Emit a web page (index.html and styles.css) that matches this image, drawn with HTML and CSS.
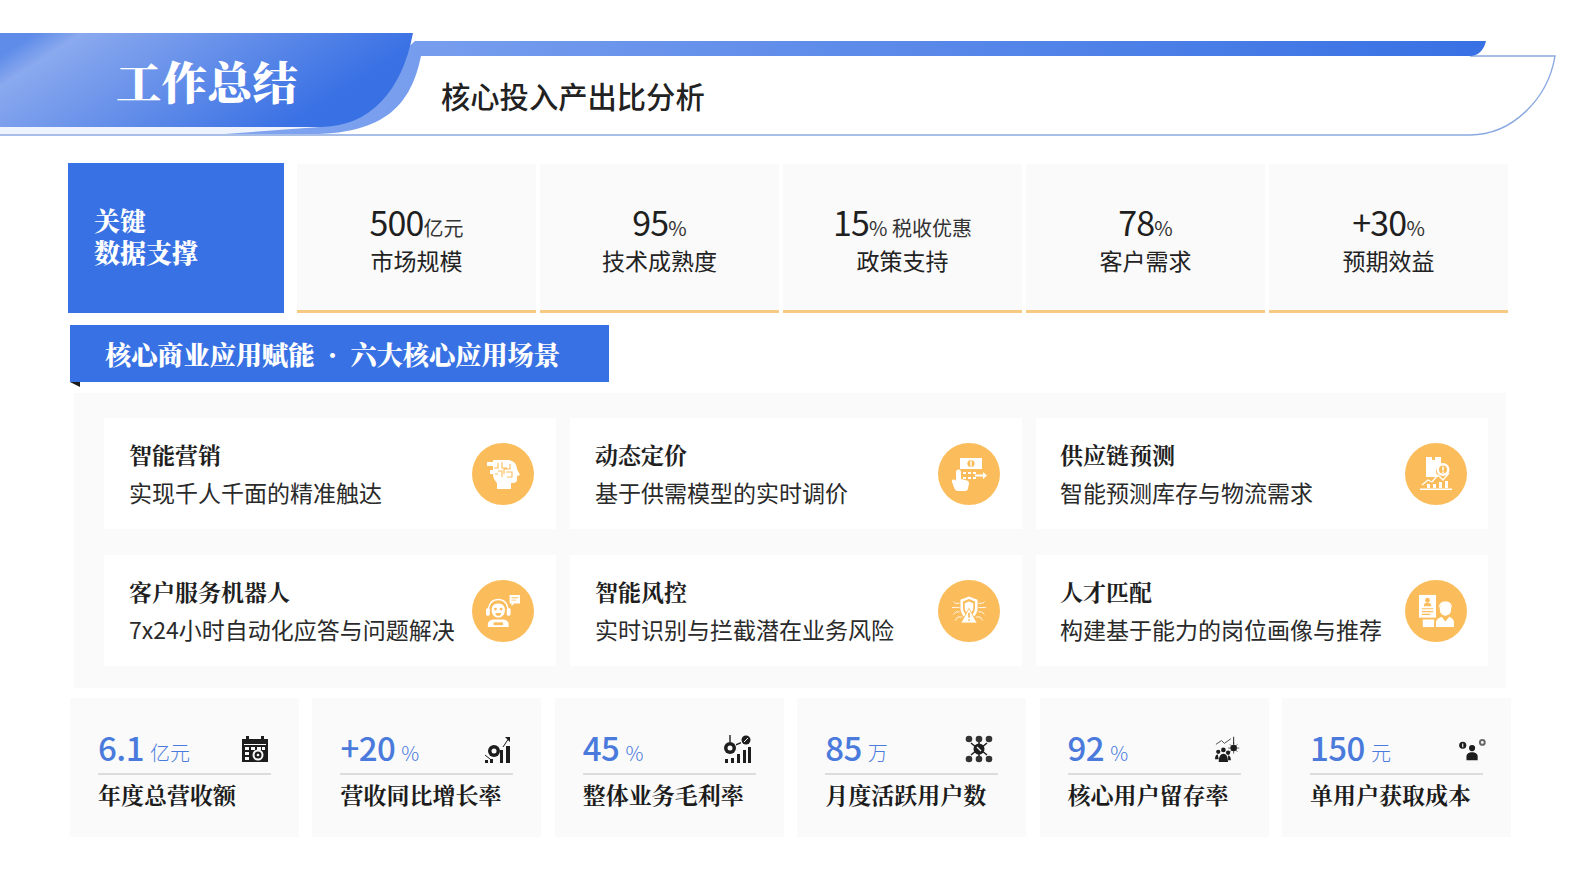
FILE: index.html
```html
<!DOCTYPE html>
<html lang="zh-CN">
<head>
    <meta charset="UTF-8">
    <title>工作总结</title>
    <link rel="stylesheet" href="styles.css">
</head>
<body>
<div class="page">

    <header class="header">
        <svg class="header-bg" viewBox="0 0 1569 110" width="1569" height="110" aria-hidden="true">
            <defs>
                <linearGradient id="barGrad" x1="0" x2="1" y1="0" y2="0">
                    <stop offset="0" stop-color="#82a5ef"/>
                    <stop offset="1" stop-color="#3871e4"/>
                </linearGradient>
                <linearGradient id="mainGrad" x1="0" x2="1" y1="0.25" y2="0.6">
                    <stop offset="0" stop-color="#5f8ce9"/>
                    <stop offset="0.1" stop-color="#8aa9ee"/>
                    <stop offset="0.85" stop-color="#3a71e4"/>
                    <stop offset="1" stop-color="#3871e4"/>
                </linearGradient>
            </defs>
            <path d="M0 94 H340 V101 H0 Z" fill="#eef3fd"/>
            <path d="M0 102 H1470 C1512 102 1548 66 1555 23 H1470" fill="none" stroke="#8aa9e0" stroke-width="1.4"/>
            <path d="M415 8 H1486 C1484 17 1478 23 1470 23 H421 C411 72 385 101 310 101 H225 L320 94 Z" fill="url(#barGrad)"/>
            <path d="M0 0 H413 C402 58 370 94 320 94 H0 Z" fill="url(#mainGrad)"/>
        </svg>
        <h1 class="header-title">工作总结</h1>
        <h2 class="header-sub">核心投入产出比分析</h2>
    </header>

    <section class="data-row">
        <div class="data-key">关键<br>数据支撑</div>
        <div class="data-card">
            <div class="data-value">500<small>亿元</small></div>
            <div class="data-label">市场规模</div>
        </div>
        <div class="data-card">
            <div class="data-value">95<small>%</small></div>
            <div class="data-label">技术成熟度</div>
        </div>
        <div class="data-card">
            <div class="data-value">15<small>% 税收优惠</small></div>
            <div class="data-label">政策支持</div>
        </div>
        <div class="data-card">
            <div class="data-value">78<small>%</small></div>
            <div class="data-label">客户需求</div>
        </div>
        <div class="data-card">
            <div class="data-value">+30<small>%</small></div>
            <div class="data-label">预期效益</div>
        </div>
    </section>

    <h3 class="section-title">核心商业应用赋能<span class="section-dot">·</span>六大核心应用场景</h3>

    <section class="panel">
        <div class="scene">
            <div class="scene-text">
                <h4>智能营销</h4>
                <p>实现千人千面的精准触达</p>
            </div>
            <div class="scene-icon">
                <svg viewBox="0 0 34 34" fill="#fff"><path d="M12 3h9c6 0 10 4 10 9l3 6-3 1v4c0 2-2 3-4 3h-2v6H11v-6c-3-3-4-6-4-9H4v-4h3V9H1V5h6V3h5z"/><g fill="none" stroke="#fbbd5c" stroke-width="1.1"><path d="M12 6v5h-4M16 5v6h5M24 7v5h-6v5M12 14h4v6M20 15h6v5h-5M9 17h3"/></g></svg>
            </div>
        </div>
        <div class="scene">
            <div class="scene-text">
                <h4>动态定价</h4>
                <p>基于供需模型的实时调价</p>
            </div>
            <div class="scene-icon">
                <svg viewBox="0 0 36 34" fill="#fff"><path d="M9 1h22v11H9z"/><circle cx="20" cy="6.500" r="3.600" fill="#fbbd5c"/><path d="M19.300 3.500h1.400v6h-1.400z"/><path d="M12 15h3v2h-3zM17 15h3v2h-3zM12 20h3v2h-3zM17 20h3v2h-3zM22 15h3v2h-3zM22 20h3v2h-3z"/><path d="M24 17.500h8V15l4 3.500-4 3.500v-2.500h-8z"/><path d="M5 15a2.500 2.500 0 0 1 5 0v7l6 1.500c1.500.5 2 1.500 2 3l-1 5c-.3 1.500-1 2.500-3 2.500H7c-2 0-3-1-3.500-2.500L1 25c-.5-1.500.5-3 2-2.500l2 1z"/></svg>
            </div>
        </div>
        <div class="scene">
            <div class="scene-text">
                <h4>供应链预测</h4>
                <p>智能预测库存与物流需求</p>
            </div>
            <div class="scene-icon">
                <svg viewBox="0 0 34 34" fill="#fff"><path d="M7 0h6v3h3V0h6v7a7.500 7.500 0 0 0-2 13H7z"/><circle cx="24" cy="12.500" r="6.500"/><circle cx="24" cy="12.500" r="4" fill="#fbbd5c"/><path d="M23.300 9.500h1.500v4h-1.500zM23.300 14.500h1.500v1.500h-1.500z"/><path d="M3 28l6-5 4 2 6-7 5 5 6-7" fill="none" stroke="#fff" stroke-width="1.300"/><path d="M8 27h3v4H8zM14 27h3v4h-3zM20 25h3v6h-3zM26 24h3v7h-3zM1 31.500h32V33H1z"/></svg>
            </div>
        </div>
        <div class="scene">
            <div class="scene-text">
                <h4>客户服务机器人</h4>
                <p>7x24小时自动化应答与问题解决</p>
            </div>
            <div class="scene-icon">
                <svg viewBox="0 0 38 36" fill="#fff"><path d="M26 1h11v9h-6l-3 3v-3h-2z"/><path d="M28 3.500h7v1h-7zM28 6h5v1h-5z" fill="#fbbd5c"/><path d="M3 17C3 9 8 5 14 5s11 4 11 12h-1.500C23.500 10 19 6.500 14 6.500S4.500 10 4.500 17z"/><rect x="1" y="15" width="4" height="8" rx="1.500"/><rect x="23" y="15" width="4" height="8" rx="1.500"/><path d="M14 10c5 0 7 3 7 7 0 5-3 8-7 8s-7-3-7-8c0-4 2-7 7-7z"/><circle cx="11" cy="16" r="1.500" fill="#fbbd5c"/><circle cx="17" cy="16" r="1.500" fill="#fbbd5c"/><path d="M11 20h6c0 2-1.500 3-3 3s-3-1-3-3z" fill="#fbbd5c"/><path d="M3 35v-3c0-3 3-5 7-5h8c4 0 7 2 7 5v3z"/><path d="M9 30h10v3H9z" fill="#fbbd5c"/></svg>
            </div>
        </div>
        <div class="scene">
            <div class="scene-text">
                <h4>智能风控</h4>
                <p>实时识别与拦截潜在业务风险</p>
            </div>
            <div class="scene-icon">
                <svg viewBox="0 0 42 36" fill="#fff"><path d="M21 1l10 4v9c0 7-4 12-10 15-6-3-10-8-10-15V5z"/><path d="M21 4l7 3v7c0 5-3 9-7 11-4-2-7-6-7-11V7z" fill="#fbbd5c"/><path d="M21 7l5 2v5c0 4-2 6-5 8-3-2-5-4-5-8V9z"/><path d="M21 15l9.500 17h-19z" stroke="#fbbd5c" stroke-width="1"/><path d="M20 20h2v6h-2zM20 27.500h2v2h-2z" fill="#fbbd5c"/><g fill="none" stroke="#fff" stroke-width="1"><path d="M10 9H5L3 7M10 14H1M10 19H6l-3 3M13 25H8l-3 4M32 9h5l2-2M32 14h9M32 19h4l3 3M29 25h5l3 4"/></g></svg>
            </div>
        </div>
        <div class="scene">
            <div class="scene-text">
                <h4>人才匹配</h4>
                <p>构建基于能力的岗位画像与推荐</p>
            </div>
            <div class="scene-icon">
                <svg viewBox="0 0 38 36" fill="#fff"><path d="M1 1h18v24H1z"/><circle cx="10" cy="6.500" r="2.500" fill="#fbbd5c"/><path d="M6 13c0-3 2-4 4-4s4 1 4 4z" fill="#fbbd5c"/><path d="M4 15h12v1.200H4zM4 18h12v1.200H4zM4 21h9v1.200H4z" fill="#fbbd5c"/><path d="M5 27h12v8H5z"/><path d="M23 16c0-4 2-6 6-6s6 2 6 6c0 4-2 7-6 7s-6-3-6-7z"/><path d="M22 15c0-5 3-7 7-7s7 2 7 7l-2-3c-3 1-7 1-10 0z"/><path d="M19 35v-5c0-3 3-5 6-6l4 5 4-5c3 1 5 3 5 6v5z"/></svg>
            </div>
        </div>
    </section>

    <section class="stats">
        <div class="stat">
            <div class="stat-head">
                <div class="stat-value">6.1<small>亿元</small></div>
                <svg class="stat-icon" viewBox="0 0 28 28" fill="#1d1d1d"><path d="M5 1h3v3h12V1h3v3h4v23H1V4h4z"/><path d="M3 9h22v1H3z" fill="#fafafa"/><path d="M4 12h4v3H4zM10 12h4v3h-4zM16 12h4v3h-4zM21 12h3v3h-3zM4 17h4v3H4zM4 22h4v3H4z" fill="#fafafa"/><circle cx="17" cy="20" r="5.500" fill="#fafafa"/><circle cx="17" cy="20" r="3.500"/><circle cx="17" cy="20" r="1.300" fill="#fafafa"/></svg>
            </div>
            <div class="stat-label">年度总营收额</div>
        </div>
        <div class="stat">
            <div class="stat-head">
                <div class="stat-value">+20<small>%</small></div>
                <svg class="stat-icon" viewBox="0 0 28 28" fill="#1d1d1d"><path d="M2 25h3v3H2zM7 24h3v4H7zM17 15h3v13h-3zM23 11h4v17h-4z"/><circle cx="11" cy="16" r="6"/><circle cx="11" cy="16" r="2.500" fill="#fafafa"/><path d="M2 20l5 4M20 12l6-9" fill="none" stroke="#1d1d1d" stroke-width="1"/><path d="M22 2h5v5z"/></svg>
            </div>
            <div class="stat-label">营收同比增长率</div>
        </div>
        <div class="stat">
            <div class="stat-head">
                <div class="stat-value">45<small>%</small></div>
                <svg class="stat-icon" viewBox="0 0 28 28" fill="#1d1d1d"><circle cx="7" cy="13" r="6"/><circle cx="7" cy="13" r="2.500" fill="#fafafa"/><path d="M6.300 0h1.400v7H6.300z"/><circle cx="23" cy="5" r="4.500"/><path d="M21 7l4-4" stroke="#fafafa" stroke-width="1"/><path d="M13 9l5-2v1.500l-5 2zM2 24h3v4H2zM8 23h3v5H8zM14 19h3v9h-3zM20 15h3v13h-3zM25 12h3v16h-3z"/></svg>
            </div>
            <div class="stat-label">整体业务毛利率</div>
        </div>
        <div class="stat">
            <div class="stat-head">
                <div class="stat-value">85<small>万</small></div>
                <svg class="stat-icon" viewBox="0 0 28 28" fill="#1d1d1d"><g fill="#333"><circle cx="4" cy="4" r="3.300"/><circle cx="14" cy="4" r="3.300"/><circle cx="24" cy="4" r="3.300"/><circle cx="4" cy="24" r="3.300"/><circle cx="14" cy="24" r="3.300"/><circle cx="24" cy="24" r="3.300"/></g><path d="M6 8l6 5M22 8l-6 5M6 20l6-5M22 20l-6-5M14 7v14" stroke="#1d1d1d" stroke-width="1.500"/><circle cx="14" cy="14" r="5.500"/><path d="M12 12l4 4" stroke="#fafafa" stroke-width="1.200"/></svg>
            </div>
            <div class="stat-label">月度活跃用户数</div>
        </div>
        <div class="stat">
            <div class="stat-head">
                <div class="stat-value">92<small>%</small></div>
                <svg class="stat-icon" viewBox="0 0 30 28" fill="#1d1d1d"><path d="M1 9l6-4 3 3 7-5" fill="none" stroke="#444" stroke-width="1"/><path d="M19.500 1h1v8h-1z"/><circle cx="20" cy="13" r="3.500"/><path d="M14 13h12M20 7v12M16 9l8 8M24 9l-8 8" stroke="#1d1d1d" stroke-width=".7"/><circle cx="9" cy="15" r="2.500"/><circle cx="3.500" cy="17" r="2.300"/><circle cx="14" cy="18" r="2.300"/><path d="M4 28c0-6 2-9 5-9s5 3 5 9zM0 25c0-3 1-5 3-5l1 5zM14 21c2 0 3 2 3 5h-3z"/></svg>
            </div>
            <div class="stat-label">核心用户留存率</div>
        </div>
        <div class="stat">
            <div class="stat-head">
                <div class="stat-value">150<small>元</small></div>
                <svg class="stat-icon" viewBox="0 0 30 28" fill="#1d1d1d"><circle cx="4" cy="10" r="3.800"/><path d="M3.400 8h1.200v4H3.400z" fill="#fafafa"/><circle cx="14" cy="13" r="3.300"/><path d="M8 26v-4c0-3 3-4.500 6-4.500s6 1.500 6 4.500v4z"/><circle cx="25" cy="7" r="3.600" fill="#666"/><circle cx="25" cy="7" r="1.500" fill="#fafafa"/></svg>
            </div>
            <div class="stat-label">单用户获取成本</div>
        </div>
    </section>

</div>
</body>
</html>
```

FILE: styles.css
```css
* {
    box-sizing: border-box;
}
body {
    margin: 0;
    background-color: #fff;
    font-family: "Noto Sans CJK SC", "Noto Sans", sans-serif;
    color: #1f1f1f;
}
.page {
    width: 1569px;
    height: 882px;
    padding-top: 33px;
    overflow: hidden;
}
h1, h2, h3, h4, p {
    margin: 0;
}

/* header */
.header {
    position: relative;
    height: 103px;
}
.header-bg {
    position: absolute;
    top: 0;
    left: 0;
}
.header-title {
    position: absolute;
    top: 18px;
    left: 116px;
    font-family: "Noto Serif CJK SC", "Noto Sans CJK SC", serif;
    font-size: 45.500px;
    line-height: 60px;
    font-weight: 900;
    color: #fff;
}
.header-sub {
    position: absolute;
    top: 40px;
    left: 441px;
    font-size: 29.300px;
    line-height: 44px;
    font-weight: 500;
    color: #222;
}

/* key data row */
.data-row {
    display: flex;
    margin: 27px 0 0 68px;
    height: 150px;
}
.data-key {
    width: 216px;
    margin-right: 13px;
    padding: 41px 0 0 26px;
    background-color: #3871e4;
    color: #fff;
    font-family: "Noto Serif CJK SC", "Noto Sans CJK SC", serif;
    font-size: 26px;
    line-height: 32px;
    font-weight: 900;
}
.data-card {
    width: 239px;
    margin-right: 4px;
    margin-top: 1px;
    padding-top: 34px;
    background-color: #fafafa;
    border-bottom: 3px solid #f6ca82;
    text-align: center;
}
.data-value {
    font-size: 34px;
    line-height: 48px;
    letter-spacing: -0.800px;
    color: #1f1f1f;
}
.data-value small {
    font-size: 20px;
    line-height: 1;
    letter-spacing: 0;
    color: #333;
}
.data-label {
    margin-top: -1px;
    font-size: 23px;
    line-height: 30px;
    color: #222;
}

/* section heading */
.section-title {
    position: relative;
    width: 539px;
    height: 57px;
    margin: 12px 0 0 70px;
    padding-left: 35px;
    background-color: #3871e4;
    color: #fff;
    font-family: "Noto Serif CJK SC", "Noto Sans CJK SC", serif;
    font-size: 26.200px;
    line-height: 57px;
    font-weight: 900;
}
.section-title::after {
    content: "";
    position: absolute;
    left: 0;
    top: 57px;
    border-top: 5px solid #1a1a1a;
    border-left: 10px solid transparent;
}
.section-dot {
    display: inline-block;
    width: 36px;
    text-align: center;
}

/* six scenarios */
.panel {
    display: grid;
    grid-template-columns: repeat(3, 452px);
    grid-auto-rows: 111px;
    column-gap: 14px;
    row-gap: 26px;
    width: 1432px;
    height: 295px;
    margin: 11px 0 0 74px;
    padding: 25px 0 0 30px;
    background-color: #fafafa;
}
.scene {
    display: flex;
    align-items: center;
    justify-content: space-between;
    padding: 0 22px 0 25px;
    background-color: #fff;
}
.scene:nth-child(3n) {
    padding: 0 21px 0 24px;
}
.scene-text h4 {
    font-family: "Noto Serif CJK SC", "Noto Sans CJK SC", serif;
    font-size: 23px;
    line-height: 32px;
    font-weight: 700;
    color: #1f1f1f;
}
.scene-text p {
    margin-top: 5px;
    font-size: 23px;
    line-height: 32px;
    color: #2a2a2a;
}
.scene-icon {
    display: flex;
    align-items: center;
    justify-content: center;
    flex: none;
    width: 62px;
    height: 62px;
    border-radius: 50%;
    background-color: #fbbd5c;
}
.scene-icon svg {
    width: 36px;
    height: 34px;
}

/* bottom metrics */
.stats {
    display: grid;
    grid-template-columns: repeat(6, 229px);
    column-gap: 13.400px;
    margin: 10px 0 0 70px;
}
.stat {
    height: 139px;
    padding: 28px 28px 0;
    background-color: #fafafa;
}
.stat-head {
    display: flex;
    align-items: center;
    justify-content: space-between;
    height: 49px;
    border-bottom: 2px solid #dcdcdc;
}
.stat-value {
    margin-bottom: 5px;
    font-size: 33px;
    line-height: 44px;
    font-weight: 500;
    letter-spacing: -0.500px;
    color: #4a7bdc;
}
.stat-value small {
    margin-left: 6px;
    font-size: 20px;
    line-height: 1;
    font-weight: 300;
    letter-spacing: 0;
}
.stat-icon {
    width: 28px;
    height: 28px;
    margin-bottom: 2px;
}
.stat:nth-child(1) .stat-icon { margin-right: 2px; }
.stat:nth-child(2) .stat-icon { margin-right: 2px; }
.stat:nth-child(3) .stat-icon { margin-right: 5px; }
.stat:nth-child(4) .stat-icon { margin-right: 5px; }
.stat:nth-child(5) .stat-icon { margin-right: -2px; }
.stat:nth-child(6) .stat-icon { margin-right: -4px; }
.stat-label {
    margin-top: 3px;
    font-family: "Noto Serif CJK SC", "Noto Sans CJK SC", serif;
    font-size: 23px;
    line-height: 34px;
    font-weight: 700;
    color: #1c1c1c;
}
```
